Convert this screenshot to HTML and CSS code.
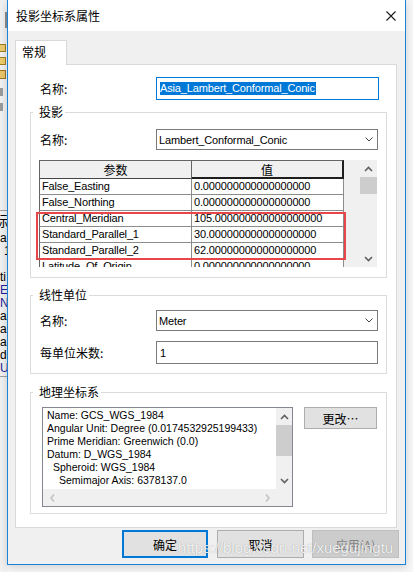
FILE: index.html
```html
<!DOCTYPE html>
<html>
<head>
<meta charset="utf-8">
<link rel="stylesheet" href="styles.css">
</head>
<body>
<div class="screen">
  <div class="bg-left">
    <div class="bl-mark"></div>
    <div class="bl-ico folder first"></div>
    <div class="bl-ico folder"></div>
    <div class="bl-ico hand"></div>
    <div class="bl-ico gray first-gray"></div>
    <div class="bl-ico gray"></div>
    <div class="bl-hline top"></div>
    <div class="bl-char">标</div>
    <div class="bl-small">a</div>
    <div class="bl-small ind">1</div>
    <div class="bl-lines">
      <div>ti</div>
      <div class="blue">E</div>
      <div class="blue">N</div>
      <div>al_</div>
      <div>ar</div>
      <div>ar</div>
      <div>de</div>
      <div class="blue">U</div>
    </div>
    <div class="bl-hline"></div>
  </div>

  <div class="dialog">
    <div class="titlebar">
      <span class="title">投影坐标系属性</span>
      <svg class="close" width="10" height="10" viewBox="0 0 10 10"><path d="M0.5 0.5 L9.5 9.5 M9.5 0.5 L0.5 9.5" stroke="#1a1a1a" stroke-width="1.1" fill="none"/></svg>
    </div>
    <div class="dlg-body">
      <div class="tabs"><div class="tab">常规</div></div>
      <div class="panel">
        <div class="name-row">
          <span class="lbl">名称:</span>
          <div class="textbox focused w223"><span class="sel">Asia_Lambert_Conformal_Conic</span></div>
        </div>

        <fieldset class="group g1">
          <legend>投影</legend>
          <div class="field-row first">
            <span class="lbl">名称:</span>
            <div class="combo"><span>Lambert_Conformal_Conic</span><svg width="8" height="5" viewBox="0 0 8 5"><path d="M0.5 0.5 L4 4 L7.5 0.5" fill="none" stroke="#444" stroke-width="1"/></svg></div>
          </div>
          <div class="grid">
            <div class="gtable">
              <div class="hc h1">参数</div>
              <div class="hc h2">值</div>
              <div class="c c1">False_Easting</div><div class="c c2">0.000000000000000000</div>
              <div class="c c1">False_Northing</div><div class="c c2">0.000000000000000000</div>
              <div class="c c1">Central_Meridian</div><div class="c c2">105.000000000000000000</div>
              <div class="c c1">Standard_Parallel_1</div><div class="c c2">30.000000000000000000</div>
              <div class="c c1">Standard_Parallel_2</div><div class="c c2">62.000000000000000000</div>
              <div class="c c1">Latitude_Of_Origin</div><div class="c c2">0.000000000000000000</div>
            </div>
            <div class="vscroll">
              <div class="sb-btn"><svg width="9" height="6" viewBox="0 0 9 6"><path d="M1 5 L4.5 1.5 L8 5" fill="none" stroke="#606060" stroke-width="1.6"/></svg></div>
              <div class="thumb"></div>
              <div class="sb-fill"></div>
              <div class="sb-btn"><svg width="9" height="6" viewBox="0 0 9 6"><path d="M1 1 L4.5 4.5 L8 1" fill="none" stroke="#606060" stroke-width="1.6"/></svg></div>
            </div>
            <div class="highlight"></div>
          </div>
        </fieldset>

        <fieldset class="group g2">
          <legend>线性单位</legend>
          <div class="field-row first">
            <span class="lbl">名称:</span>
            <div class="combo"><span>Meter</span><svg width="8" height="5" viewBox="0 0 8 5"><path d="M0.5 0.5 L4 4 L7.5 0.5" fill="none" stroke="#444" stroke-width="1"/></svg></div>
          </div>
          <div class="field-row second">
            <span class="lbl">每单位米数:</span>
            <div class="textbox w222"><span>1</span></div>
          </div>
        </fieldset>

        <fieldset class="group g3">
          <legend>地理坐标系</legend>
          <div class="geo-row">
            <div class="geo-box">
              <div class="geo-text">
                <div>Name: GCS_WGS_1984</div>
                <div>Angular Unit: Degree (0.0174532925199433)</div>
                <div>Prime Meridian: Greenwich (0.0)</div>
                <div>Datum: D_WGS_1984</div>
                <div class="i1">Spheroid: WGS_1984</div>
                <div class="i2">Semimajor Axis: 6378137.0</div>
                <div class="i2">Semiminor Axis: 6356752.314245179</div>
              </div>
              <div class="geo-vs">
                <div class="sb-btn"><svg width="9" height="6" viewBox="0 0 9 6"><path d="M1 5 L4.5 1.5 L8 5" fill="none" stroke="#606060" stroke-width="1.6"/></svg></div>
                <div class="thumb geo-thumb"></div>
                <div class="sb-fill"></div>
                <div class="sb-btn"><svg width="9" height="6" viewBox="0 0 9 6"><path d="M1 1 L4.5 4.5 L8 1" fill="none" stroke="#606060" stroke-width="1.6"/></svg></div>
              </div>
              <div class="geo-hs">
                <svg width="5" height="8" viewBox="0 0 5 8"><path d="M4 0.5 L1 4 L4 7.5" fill="none" stroke="#c2c2c2" stroke-width="1.5"/></svg>
                <svg width="5" height="8" viewBox="0 0 5 8"><path d="M1 0.5 L4 4 L1 7.5" fill="none" stroke="#c2c2c2" stroke-width="1.5"/></svg>
              </div>
              <div class="geo-corner"></div>
            </div>
            <div class="btn-change">更改…</div>
          </div>
        </fieldset>
      </div>
      <div class="buttons">
        <div class="btn default">确定</div>
        <div class="btn cancel">取消</div>
        <div class="btn disabled">应用(A)</div>
      </div>
    </div>
  </div>
  <div class="watermark">https://blog.csdn.net/xuegujingtu</div>
</div>
</body>
</html>
```
FILE: styles.css
```css
* { box-sizing: border-box; }
html, body { margin: 0; padding: 0; }
body {
  width: 413px; height: 572px; overflow: hidden;
  background: #f6f6f6;
  font-family: "Noto Sans CJK SC", "Microsoft YaHei", sans-serif;
  font-size: 12px; color: #000;
}
.screen { position: relative; display: flex; align-items: flex-start; height: 572px; }

/* background application strip */
.bg-left { flex: none; width: 7px; height: 572px; background: #f0f0f0; overflow: hidden;
  display: flex; flex-direction: column; }
.bl-mark { margin: 12px 0 0 5px; width: 2px; height: 16px; background: #8d8d8d; flex: none; }
.bl-ico { flex: none; width: 6px; height: 8px; margin-top: 5px; }
.bl-ico.first { margin-top: 16px; }
.bl-ico.folder { background: #eccb6c; border: 1px solid #a57a22; border-left: none; }
.bl-ico.hand { background: #e9c46a; border: 1px solid #9c7520; border-left: none; height: 9px; }
.bl-ico.gray { width: 3px; background: #9b9b9b; margin-top: 7px; }
.bl-ico.first-gray { margin-top: 9px; }
.bl-hline { flex: none; height: 1px; background: #a0a0a0; margin-top: 1px; }
.bl-hline.top { margin-top: 99px; }
.bl-char { flex: none; font-size: 14px; line-height: 15px; margin-top: 2px; margin-left: -6px; }
.bl-small { flex: none; font-family: "Liberation Sans", sans-serif; font-size: 12px; line-height: 12px; margin-top: 4px; }
.bl-small.ind { padding-left: 4px; margin-top: 1px; }
.bl-lines { flex: none; margin-top: 14px; font-family: "Liberation Sans", sans-serif; font-size: 12px; line-height: 13px; white-space: nowrap; }
.bl-lines .blue { color: #1c1c9a; }

/* dialog */
.dialog { flex: none; width: 399px; height: 565px; display: flex; flex-direction: column;
  background: #f0f0f0; border: 1px solid #1883d7; border-top: none;
  box-shadow: 0 2px 8px rgba(0,0,0,0.16); }
.titlebar { flex: none; height: 31px; background: #fff; display: flex; align-items: center;
  justify-content: space-between; padding: 0 9px 0 8px; }
.title { font-size: 12px; line-height: 16px; }
.close { display: block; }
.dlg-body { flex: 1; display: flex; flex-direction: column; padding: 9px 8px 6px 7px; }
.tabs { flex: none; display: flex; height: 24px; }
.tab { position: relative; z-index: 1; width: 52px; height: 25px; background: #fff;
  border: 1px solid #d9d9d9; border-bottom: none; padding: 2px 0 0 6px; line-height: 18px; }
.panel { flex: none; height: 464px; background: #fff; border: 1px solid #d9d9d9;
  padding: 12px 9px 0 14px; display: flex; flex-direction: column; align-items: flex-start; }

.lbl { line-height: 16px; white-space: nowrap; }
.name-row { display: flex; align-items: center; }
.name-row .lbl { width: 126px; padding-left: 10px; }
.field-row { display: flex; align-items: center; }
.field-row .lbl { width: 116px; }
.field-row.first { margin-top: 9px; }
.g2 .field-row.first { margin-top: 7px; }
.field-row.second { margin-top: 10px; }

.textbox { height: 23px; border: 1px solid #7a7a7a; background: #fff; display: flex; align-items: center;
  padding-left: 3px; font-family: "Liberation Sans", Arial, sans-serif; font-size: 11px; letter-spacing: -0.15px; }
.textbox.focused { border-color: #0078d7; }
.w223 { width: 223px; }
.w222 { width: 222px; }
.sel { background: #0078d7; color: #fff; line-height: 13px; padding-right: 1px; }
.combo { width: 222px; height: 21px; border: 1px solid #7a7a7a; background: #fff; display: flex;
  align-items: center; justify-content: space-between; padding: 0 4px 0 2px;
  font-family: "Liberation Sans", Arial, sans-serif; font-size: 11px; letter-spacing: -0.15px; }
.combo svg { display: block; }

/* group boxes */
.group { width: 357px; margin: 0; border: 1px solid #dcdcdc; padding: 0 8px 10px 9px; min-width: 0; }
.group legend { padding: 0 2px 0 6px; margin-left: -7px; line-height: 16px; font-size: 12px; }
.g1 { margin-top: 4px; }
.g2 { margin-top: 9px; padding-bottom: 9px; }
.g3 { margin-top: 10px; padding-bottom: 6px; }

/* property grid */
.grid { position: relative; margin: 10px 0 0 -1px; width: 338px; height: 107px; background: #f0f0f0;
  display: flex; justify-content: space-between; }
.gtable { width: 305px; height: 107px; overflow: hidden; display: grid;
  grid-template-columns: 153px 152px; grid-template-rows: 19px; grid-auto-rows: 16px;
  font-family: "Liberation Sans", Arial, sans-serif; font-size: 11px; letter-spacing: -0.15px; align-content: start; }
.hc { background: #f0f0f0; display: flex; align-items: center; justify-content: center;
  font-family: "Noto Sans CJK SC", sans-serif; font-size: 12px; letter-spacing: 0;
  border-top: 1px solid #646464; border-bottom: 1px solid #464646; }
.h1 { border-left: 1px solid #646464; border-right: 1px solid #646464; }
.h2 { border-right: 2px solid #1e1e1e; border-bottom: 2px solid #1e1e1e; }
.c { background: #fff; border-right: 1px solid #8c8c8c; border-bottom: 1px solid #8c8c8c;
  padding-left: 2px; line-height: 15px; white-space: nowrap; overflow: hidden; }
.c1 { border-left: 1px solid #646464; }
.vscroll { width: 17px; height: 107px; display: flex; flex-direction: column; background: #f0f0f0; }
.sb-btn { flex: none; height: 17px; display: flex; align-items: center; justify-content: center; }
.sb-btn svg { display: block; }
.thumb { flex: none; height: 17px; background: #cdcdcd; }
.sb-fill { flex: 1; }
.highlight { position: absolute; left: -3px; top: 52px; width: 310px; height: 48px;
  border: 2px solid #e8474a; }

/* geographic */
.geo-row { display: flex; align-items: flex-start; margin-top: 7px; }
.geo-box { margin-left: 2px; width: 251px; height: 100px; border: 1px solid #828790; display: grid;
  grid-template-columns: 1fr 16px; grid-template-rows: 1fr 17px; }
.geo-text { background: #fff; padding: 1px 0 0 4px; overflow: hidden; white-space: nowrap;
  font-family: "Liberation Sans", Arial, sans-serif; font-size: 10.5px; line-height: 13px; }
.geo-text .i1 { padding-left: 6px; }
.geo-text .i2 { padding-left: 12px; }
.geo-vs { background: #f0f0f0; display: flex; flex-direction: column; }
.geo-thumb { height: 31px; }
.geo-hs { background: #f0f0f0; display: flex; align-items: center; justify-content: space-between;
  padding: 0 6px 0 7px; }
.geo-hs svg { display: block; }
.geo-corner { background: #f0f0f0; }
.btn-change { flex: none; margin-left: 11px; width: 73px; height: 22px; border: 1px solid #adadad;
  background: #e1e1e1; display: flex; align-items: center; justify-content: center; }

/* buttons */
.buttons { flex: none; display: flex; margin-top: 2px; height: 28px; padding-left: 107px; }
.btn { flex: none; height: 28px; width: 87px; border: 1px solid #adadad; background: #e1e1e1;
  display: flex; align-items: center; justify-content: center; }
.btn.default { width: 86px; border: 2px solid #0078d7; margin-right: 9px; }
.btn.cancel { margin-right: 8px; }
.btn.disabled { background: #cccccc; border-color: #bfbfbf; color: #838383; }

.watermark { position: absolute; left: 178px; top: 539px; font-family: "Liberation Sans", Arial, sans-serif;
  font-size: 15px; line-height: 18px; color: rgba(255,255,255,0.88); white-space: nowrap;
  text-shadow: 0 0 1px rgba(0,0,0,0.35); }
```
